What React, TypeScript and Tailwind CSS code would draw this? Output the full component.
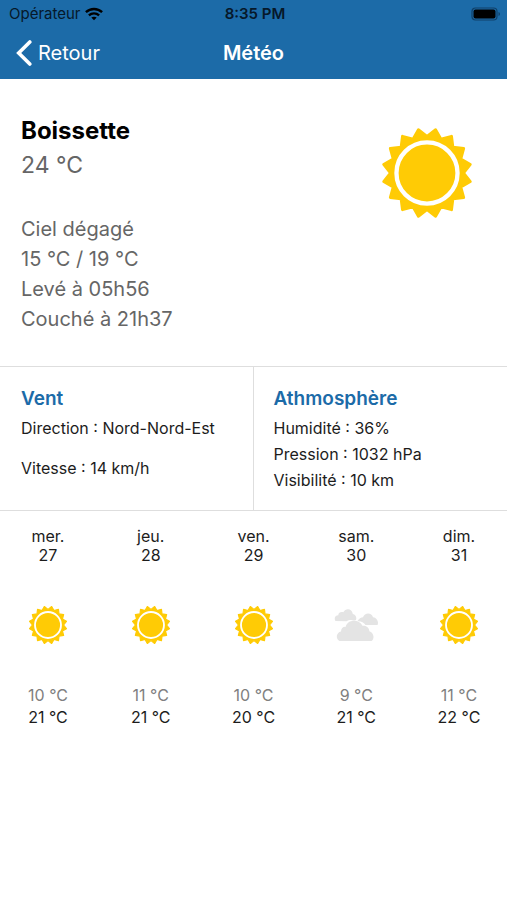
import { useId } from 'react'

const current = {
  city: 'Boissette',
  temp: '24 °C',
  details: ['Ciel dégagé', '15 °C / 19 °C', 'Levé à 05h56', 'Couché à 21h37'],
}

const days = [
  { name: 'mer.', date: 27, icon: 'sun', min: 10, max: 21 },
  { name: 'jeu.', date: 28, icon: 'sun', min: 11, max: 21 },
  { name: 'ven.', date: 29, icon: 'sun', min: 10, max: 20 },
  { name: 'sam.', date: 30, icon: 'clouds', min: 9, max: 21 },
  { name: 'dim.', date: 31, icon: 'sun', min: 11, max: 22 },
]

// star outline around 50,50: tips and notches alternate
function rays(count: number, outer: number, inner: number){
  const pts: string[] = []
  for (let i = 0; i < count * 2; i++){
    const r = i % 2 ? outer : inner
    const a = (Math.PI * i) / count
    pts.push(`${(50 + r * Math.cos(a)).toFixed(2)},${(50 + r * Math.sin(a)).toFixed(2)}`)
  }
  return pts.join(' ')
}

const sunRays = rays(16, 47, 39)

function Sun({ className }: { className: string }){
  return (
    <svg viewBox="0 0 100 100" className={className} aria-hidden="true">
      <polygon points={sunRays} fill="#ffcb05" stroke="#ffcb05" strokeWidth="3" strokeLinejoin="round" />
      <circle cx="50" cy="50" r="32.5" fill="none" stroke="#fff" strokeWidth="4.6" />
    </svg>
  )
}

function Clouds({ className }: { className: string }){
  return (
    <svg viewBox="0 0 44 34" className={className} aria-hidden="true" fill="#e4e4e4">
      <path d="M1.500 13C-.2 10.500 1 7.500 4.300 7.300 4.200 4.500 7 3.300 9.300 4.200 11.500-.2 18.300.3 18.800 6 21.500 6.200 23 9.500 22 12L20.500 12.600C18 11.600 14.500 11.700 12.500 13.300Z" />
      <path d="M23.300 13.200C25 10.500 27 9.300 29 9.300 30.500 4.500 37.500 4 39 9.200 43 9.500 45 14 43.500 17H31.500C30 14.300 26.800 12.900 23.300 13.200Z" />
      <path d="M5.500 33C1.500 31 2 24.500 7 23.500 7 20 9.500 18.300 11.800 18.800 13 11.500 25 10.500 28.500 17.800 32.500 17.300 35.500 20 35.300 23.300 40.500 25 40.500 31.500 37.500 33Z" />
    </svg>
  )
}

function StatusBar(){
  return (
    <div className="grid grid-cols-3 items-center h-7 pl-[9px] pr-1.5 text-[15px] text-[#06182a]">
      <div className="flex items-center gap-1">
        <span>Opérateur</span>
        <svg viewBox="0 0 18 14" className="w-[18px] h-3.5" aria-hidden="true" fill="none" stroke="#000" strokeWidth="2.4">
          <path d="M.9 5.200C5.500.900 12.500.900 17.100 5.200" />
          <path d="M3.900 8.300C6.800 5.700 11.200 5.700 14.100 8.300" />
          <path d="M9 13.300 6.300 10.600C7.800 9.300 10.200 9.300 11.700 10.600Z" fill="#000" stroke="none" />
        </svg>
      </div>
      <div className="text-center font-semibold">8:35 PM</div>
      <svg viewBox="0 0 30 14" className="w-[30px] h-3.5 justify-self-end" aria-hidden="true">
        <rect x="1" y="1" width="25" height="12" rx="3.5" fill="none" stroke="#104069" strokeWidth="1.2" />
        <rect x="2.5" y="2.5" width="22" height="9" rx="2" fill="#000" />
        <path d="M27.500 5C29.500 5.800 29.500 8.200 27.500 9Z" fill="#104069" />
      </svg>
    </div>
  )
}

export default function App(){
  const windId = useId()
  const airId = useId()

  return (
    <div className="min-h-screen bg-white font-['Inter',sans-serif] text-[#1c1c1c]">
      <header className="bg-[#1c6ba8]">
        <StatusBar />
        <nav className="grid grid-cols-3 items-center h-[51px] px-4 pb-px text-xl text-white">
          <button className="flex items-center gap-1.5 justify-self-start">
            <svg viewBox="0 0 16 26" className="w-4 h-[26px]" aria-hidden="true" fill="none" stroke="#fff" strokeWidth="3.6" strokeLinecap="round">
              <path d="M13.800 2 2.700 13 13.800 24" />
            </svg>
            Retour
          </button>
          <h1 className="text-center font-semibold">Météo</h1>
        </nav>
      </header>

      <main>
        <section className="flex justify-between px-[21px] pt-[35px] pb-8 border-b border-[#dedede]">
          <div className="text-[#666]">
            <h2 className="text-2xl leading-[34px] font-bold text-black">{current.city}</h2>
            <p className="text-[23px] leading-[34px]">{current.temp}</p>
            <div className="mt-8 text-xl leading-[30px]">
              {current.details.map(d => <p key={d}>{d}</p>)}
            </div>
          </div>
          <Sun className="w-[94px] h-[94px] mt-3 mr-3" />
        </section>

        <div className="grid grid-cols-2 border-b border-[#dedede] text-base">
          <section aria-labelledby={windId} className="px-[21px] pt-4 pb-[17px] border-r border-[#dedede]">
            <h3 id={windId} className="text-[19px] leading-8 font-semibold text-[#1c6ba8]">Vent</h3>
            <p className="leading-[26px]">Direction : Nord-Nord-Est</p>
            <p className="mt-3.5 leading-[26px]">Vitesse : 14 km/h</p>
          </section>
          <section aria-labelledby={airId} className="px-5 pt-4 pb-[17px]">
            <h3 id={airId} className="text-[19px] leading-8 font-semibold text-[#1c6ba8]">Athmosphère</h3>
            <p className="leading-[26px]">Humidité : 36%</p>
            <p className="leading-[26px]">Pression : 1032 hPa</p>
            <p className="leading-[26px]">Visibilité : 10 km</p>
          </section>
        </div>

        <ul className="flex justify-between pt-4 text-base text-center">
          {days.map(d => (
            <li key={d.date} className="flex flex-col items-center w-24">
              <p className="leading-[19px]">{d.name}</p>
              <p className="leading-[19px]">{d.date}</p>
              <div className="flex items-center justify-center h-[119px]">
                {d.icon === 'sun' ? <Sun className="w-10 h-10" /> : <Clouds className="w-11 h-[34px]" />}
              </div>
              <p className="leading-[22px] text-[#808080]">{d.min} °C</p>
              <p className="leading-[22px]">{d.max} °C</p>
            </li>
          ))}
        </ul>
      </main>
    </div>
  )
}
